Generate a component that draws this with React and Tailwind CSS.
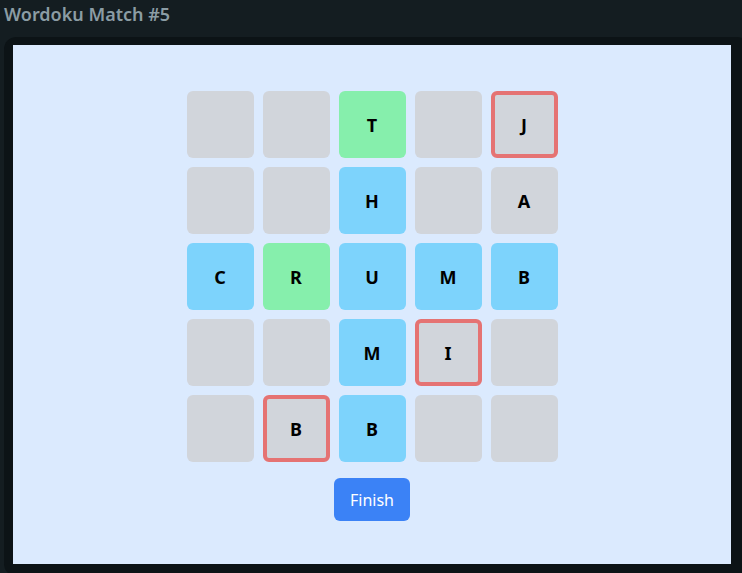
const rows = [
  [null, null, { l: 'T', c: 'g' }, null, { l: 'J', c: 'x' }],
  [null, null, { l: 'H', c: 'b' }, null, { l: 'A', c: 'n' }],
  [{ l: 'C', c: 'b' }, { l: 'R', c: 'g' }, { l: 'U', c: 'b' }, { l: 'M', c: 'b' }, { l: 'B', c: 'b' }],
  [null, null, { l: 'M', c: 'b' }, { l: 'I', c: 'x' }, null],
  [null, { l: 'B', c: 'x' }, { l: 'B', c: 'b' }, null, null],
]

function Cell({ cell }) {
  const kind = cell ? cell.c : 'n'
  const cls =
    kind === 'g'
      ? 'bg-[#86efac]'
      : kind === 'b'
        ? 'bg-[#7dd3fc]'
        : kind === 'x'
          ? 'bg-[#d1d5db] border-4 border-[#e57373]'
          : 'bg-[#d1d5db]'
  return (
    <div className={`w-[67px] h-[67px] rounded-md flex items-center justify-center text-lg font-bold text-black ${cls}`}>
      {cell ? cell.l : ''}
    </div>
  )
}

export default function App() {
  return (
    <div className="w-[742px] h-[573px] overflow-hidden bg-[#141d21]" style={{ fontFamily: '"Noto Sans", "Open Sans", sans-serif' }}>
      <h1 className="h-[32px] pl-1 text-lg font-semibold text-[#8b9ca4] leading-[28px]">Wordoku Match #5</h1>
      <div className="ml-1 mt-[5px] w-[745px] rounded-xl bg-[#0c1316] pl-[9px] pt-2 pb-3">
        <div className="w-[718px] h-[519px] bg-[#dbeafe] flex flex-col items-center pt-[46px]">
          <div className="grid grid-cols-5 gap-[9px]">
            {rows.map((row, r) => row.map((cell, c) => <Cell key={`${r}-${c}`} cell={cell} />))}
          </div>
          <button type="button" className="mt-4 w-[76px] h-[43px] rounded-md bg-[#3b82f6] text-white text-base">
            Finish
          </button>
        </div>
      </div>
    </div>
  )
}
